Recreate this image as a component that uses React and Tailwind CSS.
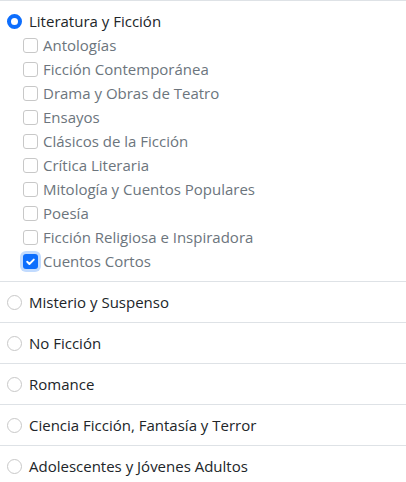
import { useState } from "react";

const subgeneros = [
  "Antologías",
  "Ficción Contemporánea",
  "Drama y Obras de Teatro",
  "Ensayos",
  "Clásicos de la Ficción",
  "Crítica Literaria",
  "Mitología y Cuentos Populares",
  "Poesía",
  "Ficción Religiosa e Inspiradora",
  "Cuentos Cortos",
];

const generos = [
  "Literatura y Ficción",
  "Misterio y Suspenso",
  "No Ficción",
  "Romance",
  "Ciencia Ficción, Fantasía y Terror",
  "Adolescentes y Jóvenes Adultos",
];

function Radio({ checked }) {
  return checked ? (
    <span className="w-[15px] h-[15px] shrink-0 rounded-full border-[4px] border-[#0d6efd] bg-white" />
  ) : (
    <span className="w-[15px] h-[15px] shrink-0 rounded-full border border-[#c8c8c8] bg-white" />
  );
}

function Checkbox({ checked }) {
  return checked ? (
    <span className="w-[15px] h-[15px] shrink-0 rounded-[3px] bg-[#0d6efd] ring-[3px] ring-[#c2dbfe] flex items-center justify-center">
      <svg width="11" height="11" viewBox="0 0 20 20" fill="none">
        <path d="M4 10.5l4 4 8-8" stroke="white" strokeWidth="3.5" strokeLinecap="round" strokeLinejoin="round" />
      </svg>
    </span>
  ) : (
    <span className="w-[15px] h-[15px] shrink-0 rounded-[3px] border border-[#c8c8c8] bg-white" />
  );
}

export default function App() {
  const [genero] = useState("Literatura y Ficción");
  const [marcados] = useState(["Cuentos Cortos"]);

  return (
    <div className="w-[406px] h-[482px] overflow-hidden bg-white font-['Open_Sans',sans-serif] text-[15px] leading-6">
      <ul className="border-t border-[#dee2e6]">
        {generos.map((g) => (
          <li key={g} className="border-b border-[#dee2e6] py-2 pl-[7px]">
            <div className="flex items-center gap-[7px] text-[#212529]">
              <Radio checked={g === genero} />
              <span>{g}</span>
            </div>
            {g === genero && (
              <ul className="pl-4">
                {subgeneros.map((s) => (
                  <li key={s} className="flex items-center gap-[5px] text-[#6c757d]">
                    <Checkbox checked={marcados.includes(s)} />
                    <span>{s}</span>
                  </li>
                ))}
              </ul>
            )}
          </li>
        ))}
      </ul>
    </div>
  );
}
